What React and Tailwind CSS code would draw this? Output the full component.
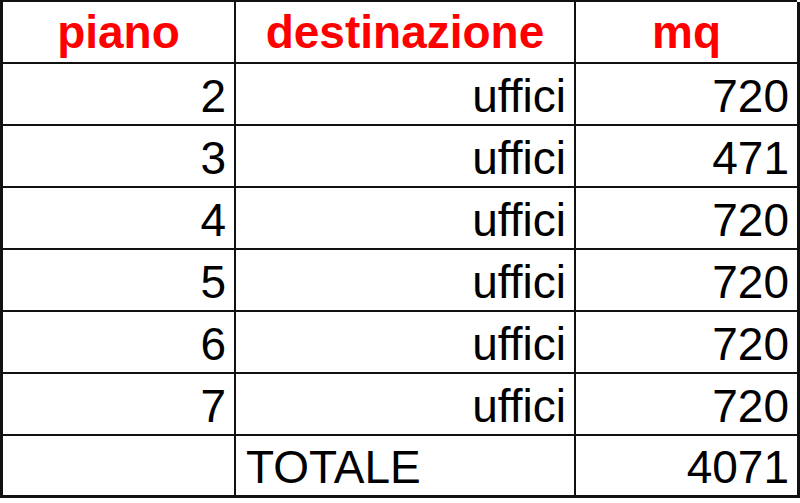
import React from 'react';

const rows = [
  { piano: '2', dest: 'uffici', mq: '720' },
  { piano: '3', dest: 'uffici', mq: '471' },
  { piano: '4', dest: 'uffici', mq: '720' },
  { piano: '5', dest: 'uffici', mq: '720' },
  { piano: '6', dest: 'uffici', mq: '720' },
  { piano: '7', dest: 'uffici', mq: '720' },
];

const cell = 'flex items-center h-[62px] border-r-2 border-b-2 border-[#111]';

const App = () => {
  return (
    <div className="w-[800px] h-[503px] bg-white overflow-hidden">
      <div
        className="grid grid-cols-[233px_340px_224px] w-[797px] border-l-[3px] border-t-2 border-[#111] text-[46px] leading-none text-black"
        style={{ fontFamily: '"Liberation Sans", Arial, sans-serif' }}
      >
        {/* header */}
        <div className={`${cell} justify-center font-bold text-[#ff0000]`}>piano</div>
        <div className={`${cell} justify-center font-bold text-[#ff0000]`}>destinazione</div>
        <div className={`${cell} justify-center font-bold text-[#ff0000] border-r-[3px]`}>mq</div>

        {rows.map((r, i) => (
          <React.Fragment key={i}>
            <div className={`${cell} justify-end pr-[8px] pt-[3px]`}>{r.piano}</div>
            <div className={`${cell} justify-end pr-[8px] pt-[3px]`}>{r.dest}</div>
            <div className={`${cell} justify-end pr-[8px] pt-[3px] border-r-[3px]`}>{r.mq}</div>
          </React.Fragment>
        ))}

        {/* totale */}
        <div className={`${cell} border-b-[3px]`} />
        <div className={`${cell} justify-start pl-[10px] pt-[3px] border-b-[3px]`}>TOTALE</div>
        <div className={`${cell} justify-end pr-[8px] pt-[3px] border-r-[3px] border-b-[3px]`}>4071</div>
      </div>
    </div>
  );
};

export default App;
